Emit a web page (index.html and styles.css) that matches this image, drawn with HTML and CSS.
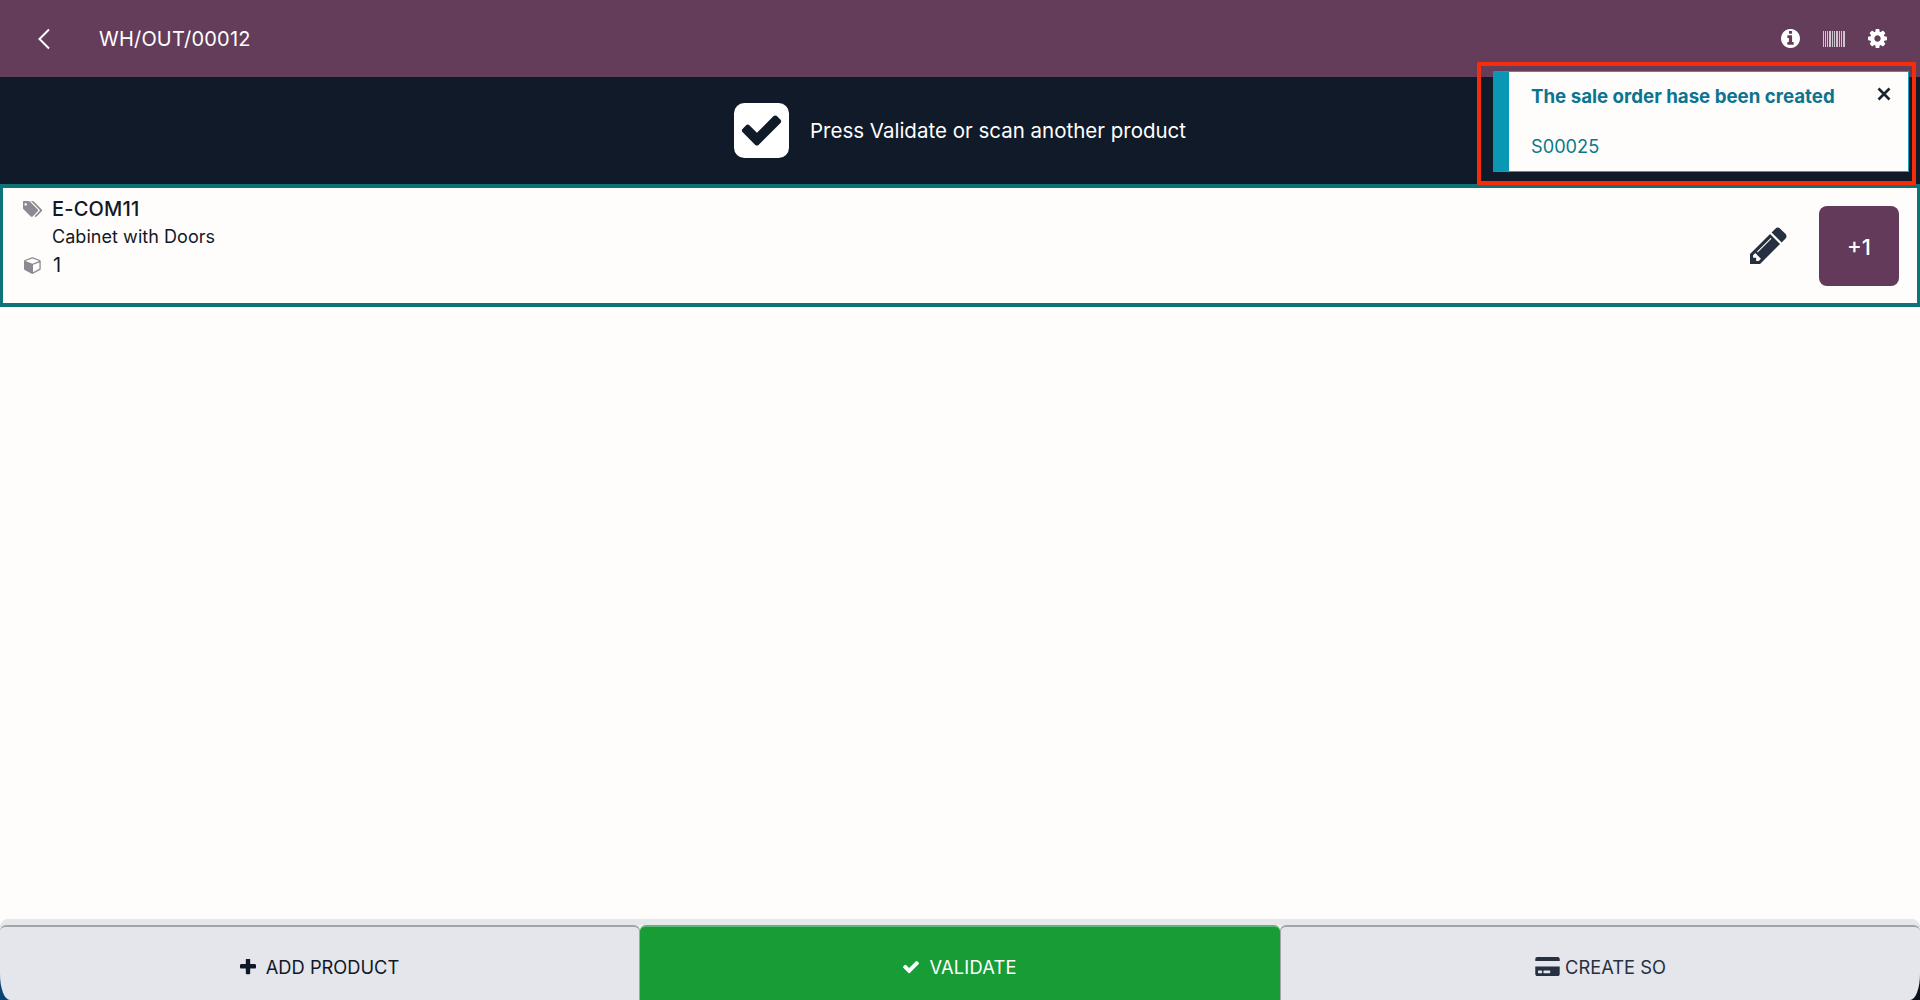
FILE: index.html
```html
<!DOCTYPE html>
<html lang="en">
<head>
    <meta charset="UTF-8">
    <meta name="viewport" content="width=device-width, initial-scale=1.0">
    <title>WH/OUT/00012</title>
    <link rel="stylesheet" href="styles.css">
</head>
<body>
    <header class="navbar">
        <div class="nav-left">
            <svg class="back-icon" viewBox="0 0 14 22"><polyline points="12,1.5 2.5,11 12,20.5"/></svg>
            <span class="nav-title">WH/OUT/00012</span>
        </div>
        <div class="nav-right">
            <svg class="nav-icon" viewBox="128 128 1536 1536"><path d="M1152 1376v-160q0-14-9-23t-23-9h-96v-512q0-14-9-23t-23-9h-320q-14 0-23 9t-9 23v160q0 14 9 23t23 9h96v320h-96q-14 0-23 9t-9 23v160q0 14 9 23t23 9h448q14 0 23-9t9-23zm-128-896v-160q0-14-9-23t-23-9h-192q-14 0-23 9t-9 23v160q0 14 9 23t23 9h192q14 0 23-9t9-23zm640 416q0 209-103 385.5t-279.5 279.5-385.5 103-385.5-103-279.5-279.5-103-385.5 103-385.5 279.5-279.5 385.5-103 385.5 103 279.5 279.5 103 385.5z"/></svg>
            <svg class="barcode-icon" viewBox="0 0 22 16">
                <rect x="0" width="1" height="16"/><rect x="2" width="1" height="16"/><rect x="4" width="1" height="16"/>
                <rect x="6" width="2" height="16"/><rect x="9" width="1" height="16"/><rect x="11" width="1" height="16"/>
                <rect x="13" width="2" height="16"/><rect x="16" width="1" height="16"/><rect x="18" width="1" height="16"/>
                <rect x="20" width="2" height="16"/>
            </svg>
            <svg class="nav-icon" viewBox="128 128 1536 1536"><path d="M1152 896q0-106-75-181t-181-75-181 75-75 181 75 181 181 75 181-75 75-181zm512-109v222q0 12-8 23t-20 13l-185 28q-19 54-39 91 35 50 107 138 10 12 10 25t-9 23q-27 37-99 108t-94 71q-12 0-26-9l-138-108q-44 23-91 38-16 136-29 186-7 28-36 28h-222q-14 0-24.5-8.5t-11.5-21.5l-28-184q-49-16-90-37l-141 107q-10 9-25 9-14 0-25-11-126-114-165-168-7-10-7-23 0-12 8-23 15-21 51-66.5t54-70.5q-27-50-41-99l-183-27q-13-2-21-12.5t-8-23.5v-222q0-12 8-23t19-13l186-28q14-46 39-92-40-57-107-138-10-12-10-24 0-10 9-23 26-36 98.5-107.5t94.5-71.5q13 0 26 10l138 107q44-23 91-38 16-136 29-186 7-28 36-28h222q14 0 24.5 8.5t11.5 21.5l28 184q49 16 90 37l142-107q9-9 24-9 13 0 25 10 129 119 165 170 7 8 7 22 0 12-8 23-15 21-51 66.5t-54 70.5q26 50 41 98l183 28q13 2 21 12.5t8 23.5z"/></svg>
        </div>
    </header>

    <div class="status-band">
        <svg class="status-icon" viewBox="128 128 1536 1536"><path d="M813 1299l614-614q19-19 19-45t-19-45l-102-102q-19-19-45-19t-45 19l-467 467-211-211q-19-19-45-19t-45 19l-102 102q-19 19-19 45t19 45l358 358q19 19 45 19t45-19zm851-883v960q0 119-84.5 203.5t-203.5 84.5h-960q-119 0-203.5-84.5t-84.5-203.5v-960q0-119 84.5-203.5t203.5-84.5h960q119 0 203.5 84.5t84.5 203.5z"/></svg>
        <span>Press Validate or scan another product</span>
    </div>

    <main class="lines">
        <div class="line">
            <div class="line-info">
                <div class="line-row line-ref">
                    <svg class="line-icon" viewBox="0 128 1920 1536"><path d="M384 448q0-53-37.5-90.5t-90.5-37.5-90.5 37.5-37.5 90.5 37.5 90.5 90.5 37.5 90.5-37.5 37.5-90.5zm1067 576q0 53-37 90l-491 492q-39 37-91 37-53 0-90-37l-715-716q-38-37-64.5-101t-26.5-117v-416q0-52 38-90t90-38h416q53 0 117 26.5t102 64.5l715 714q37 39 37 91zm384 0q0 53-37 90l-491 492q-39 37-91 37-36 0-59-14t-53-45l470-470q37-37 37-90 0-52-37-91l-715-714q-38-38-102-64.5t-117-26.5h224q53 0 117 26.5t102 64.5l715 714q37 39 37 91z"/></svg>
                    <span>E-COM11</span>
                </div>
                <div class="line-row line-name"><span>Cabinet with Doors</span></div>
                <div class="line-row line-qty">
                    <svg class="line-icon" viewBox="128 0 1536 1792"><path d="M896 1629l640-349v-636l-640 233v752zm-64-865l698-254-698-254-698 254zm832-252v768q0 35-18 65t-49 47l-704 384q-28 16-61 16t-61-16l-704-384q-31-17-49-47t-18-65v-768q0-40 23-73t61-47l704-256q22-8 44-8t44 8l704 256q38 14 61 47t23 73z"/></svg>
                    <span>1</span>
                </div>
            </div>
            <div class="line-actions">
                <svg class="edit-icon" viewBox="128 128 1536 1536"><path d="M491 1536l91-91-235-235-91 91v107h128v128h107zm523-928q0-22-22-22-10 0-17 7l-542 542q-7 7-7 17 0 22 22 22 10 0 17-7l542-542q7-7 7-17zm-54-192l416 416-832 832h-416v-416zm683 96q0 53-37 90l-166 166-416-416 166-165q36-38 90-38 53 0 91 38l235 234q37 39 37 91z"/></svg>
                <button class="plus-btn">+1</button>
            </div>
        </div>
    </main>

    <footer class="footer">
        <button class="foot-btn">
            <svg class="foot-icon" viewBox="192 192 1408 1408"><path d="M1600 736v192q0 40-28 68t-68 28h-416v416q0 40-28 68t-68 28h-192q-40 0-68-28t-28-68v-416h-416q-40 0-68-28t-28-68v-192q0-40 28-68t68-28h416v-416q0-40 28-68t68-28h192q40 0 68 28t28 68v416h416q40 0 68 28t28 68z"/></svg>
            ADD PRODUCT
        </button>
        <button class="foot-btn foot-btn-green">
            <svg class="foot-icon" viewBox="121 342 1550 1150"><path d="M1671 566q0 40-28 68l-724 724-136 136q-28 28-68 28t-68-28l-136-136-362-362q-28-28-28-68t28-68l136-136q28-28 68-28t68 28l294 295 656-657q28-28 68-28t68 28l136 136q28 28 28 68z"/></svg>
            VALIDATE
        </button>
        <button class="foot-btn foot-btn-so">
            <svg class="card-icon" viewBox="0 32 576 448"><path d="M0 432c0 26.500 21.500 48 48 48h480c26.500 0 48-21.500 48-48V256H0v176zm192-68c0-6.600 5.400-12 12-12h136c6.600 0 12 5.400 12 12v40c0 6.600-5.400 12-12 12H204c-6.600 0-12-5.400-12-12v-40zm-128 0c0-6.600 5.400-12 12-12h72c6.600 0 12 5.400 12 12v40c0 6.600-5.400 12-12 12H76c-6.600 0-12-5.400-12-12v-40zM576 80v48H0V80c0-26.500 21.500-48 48-48h480c26.500 0 48 21.500 48 48z"/></svg>
            CREATE SO
        </button>
    </footer>

    <div class="toast">
        <div class="toast-title">The sale order hase been created</div>
        <div class="toast-body">S00025</div>
        <svg class="toast-close" viewBox="0 0 14 14"><path d="M1.500 1.500l11 11M12.500 1.500l-11 11"/></svg>
    </div>
    <div class="highlight-box"></div>
</body>
</html>
```

FILE: styles.css
```css
html, body {
    height: 100%;
}

body {
    margin: 0;
    display: flex;
    flex-direction: column;
    height: 1000px;
    overflow: hidden;
    position: relative;
    font-family: 'Inter', sans-serif;
    background-color: #FFFDFB;
    color: #111827;
}

.navbar {
    height: 77px;
    flex-shrink: 0;
    display: flex;
    align-items: center;
    justify-content: space-between;
    padding: 0 33px 0 37px;
    box-sizing: border-box;
    background-color: #643D5B;
    color: #fff;
}

.nav-left, .nav-right {
    display: flex;
    align-items: center;
}

.back-icon {
    width: 14px;
    height: 22px;
    margin-right: 48px;
    fill: none;
    stroke: #fff;
    stroke-width: 2;
}

.nav-title {
    font-size: 20px;
    letter-spacing: 0.2px;
}

.nav-right {
    gap: 23px;
}

.nav-icon {
    width: 19px;
    height: 19px;
    fill: #fff;
}

.barcode-icon {
    width: 22px;
    height: 16px;
    fill: #fff;
    opacity: 0.7;
}

.status-band {
    height: 107px;
    flex-shrink: 0;
    display: flex;
    align-items: center;
    justify-content: center;
    gap: 21px;
    background-color: #101A28;
    color: #fff;
    font-size: 20.500px;
}

.status-icon {
    width: 55px;
    height: 55px;
    fill: #fff;
}

.lines {
    flex: 1;
}

.line {
    height: 123px;
    box-sizing: border-box;
    display: flex;
    align-items: center;
    justify-content: space-between;
    padding: 0 18px 0 20px;
    border: 4px solid #0C7479;
    border-left-width: 3px;
    border-right-width: 3px;
}

.line-info {
    display: flex;
    flex-direction: column;
    gap: 2px;
    margin-top: -18px;
}

.line-row {
    display: flex;
    align-items: center;
    gap: 9px;
    height: 26px;
}

.line-ref {
    font-size: 20px;
    font-weight: 500;
    letter-spacing: 0.2px;
}

.line-name {
    font-size: 18px;
    letter-spacing: 0.05px;
    padding-left: 29px;
}

.line-qty {
    font-size: 20px;
}

.line-qty span {
    padding-left: 1px;
}

.line-icon {
    width: 20px;
    height: 18px;
    fill: #8A8A90;
}

.line-actions {
    display: flex;
    align-items: center;
    gap: 32px;
}

.edit-icon {
    width: 37px;
    height: 37px;
    fill: #263041;
}

.plus-btn {
    width: 80px;
    height: 80px;
    padding: 2px 0 0;
    border: none;
    border-radius: 8px;
    background-color: #643A5A;
    color: #fff;
    font-family: inherit;
    font-size: 22px;
    font-weight: 500;
}

.footer {
    flex-shrink: 0;
    height: 81px;
    box-sizing: border-box;
    display: grid;
    grid-template-columns: repeat(3, 1fr);
    border-top: 6px solid #E5E7EB;
    border-radius: 8px 8px 0 0;
    background:
        linear-gradient(to bottom, #F0F1F4 30px, transparent 30px),
        linear-gradient(to right, #0B4472 50%, #0B0F19 50%);
}

.foot-btn {
    display: flex;
    align-items: center;
    justify-content: center;
    gap: 10px;
    padding: 6px 0 0;
    border: none;
    border-top: 2px solid #A3A5AB;
    border-radius: 6px 6px 0 0;
    background-color: #E4E6EB;
    color: #111827;
    font-family: inherit;
    font-size: 18.300px;
}

.foot-btn:first-child {
    border-bottom-left-radius: 10px 26px;
    border-right: 1px solid #A3A5AB;
}

.foot-btn-green {
    background-color: #189C36;
    border-top-color: #5FB674;
    color: #fff;
    letter-spacing: 0.2px;
}

.foot-btn-so {
    gap: 5px;
    color: #263041;
    border-left: 1px solid #A3A5AB;
    border-bottom-right-radius: 10px 26px;
}

.foot-icon {
    width: 16px;
    height: 16px;
    fill: currentColor;
}

.card-icon {
    width: 25px;
    height: 19px;
    fill: currentColor;
}

.toast {
    position: absolute;
    top: 71px;
    left: 1493px;
    width: 416px;
    height: 101px;
    box-sizing: border-box;
    padding: 13px 20px 0 22px;
    border: 1px solid #19A3BC;
    border-left: 16px solid #0997B3;
    background-color: #FFFDFB;
    color: #0A7A8A;
}

.toast-title {
    font-size: 18.700px;
    font-weight: 700;
    line-height: 24px;
    color: #0A7592;
}

.toast-body {
    margin-top: 25px;
    font-size: 18.200px;
    line-height: 24px;
}

.toast-close {
    position: absolute;
    top: 15px;
    right: 17px;
    width: 14px;
    height: 14px;
    fill: none;
    stroke: #1C2433;
    stroke-width: 2.600;
}

.highlight-box {
    position: absolute;
    top: 62px;
    left: 1477px;
    width: 439px;
    height: 123px;
    box-sizing: border-box;
    border: 4px solid #F52D0A;
}
```
